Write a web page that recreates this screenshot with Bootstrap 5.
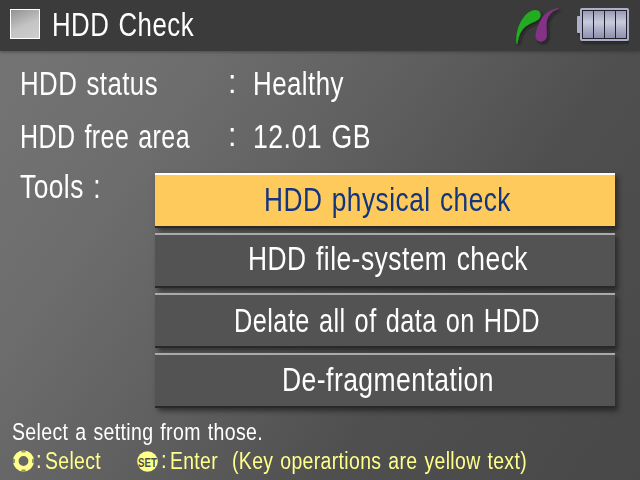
<!DOCTYPE html>
<html lang="en">
<head>
<meta charset="utf-8">
<meta name="viewport" content="width=device-width, initial-scale=1">
<title>HDD Check</title>
<link href="https://cdn.jsdelivr.net/npm/bootstrap@5.3.0/dist/css/bootstrap.min.css" rel="stylesheet">
<style>
  body { width: 640px; height: 480px; overflow: hidden; color: #fff;
    font-family: "Liberation Sans", Arial, sans-serif; font-size: 34px; line-height: 34px;
    background: linear-gradient(125deg, #757575 0%, #6d6d6d 25%, #5e5e5e 48%, #4f4f4f 68%, #484848 100%); }
  .topbar { height: 51px; background: #3b3b3b; box-shadow: 0 1px 3px rgba(40,40,40,.5); padding: 0 11px 0 10px; }
  .tile { width: 30px; height: 30px; border: 1px solid #fff; margin-top: -3px;
    background: linear-gradient(155deg, #929292, #c4c4c4 55%, #cecece); }
  .screen-title { margin: -3px 0 0 12px; font-size: 34px; line-height: 34px; font-weight: 400; }
  .fit { display: block; white-space: nowrap; flex: none; }
  .fit > span { display: inline-block; transform-origin: 0 50%; letter-spacing: .018em; word-spacing: .06em; }
  .panel { padding: 15px 25px 0 20px; height: 362px; }
  .info { height: 53px; }
  .label-col { width: 208px; }
  .colon-col { width: 25px; margin-top: -2px; }
  .tools-col { width: 135px; margin-top: -3px; }
  .tool-list { gap: 5px; width: 460px; margin-top: 1px; }
  .tool { height: 55px; border: 0; border-top: 2px solid #aaa; border-bottom: 2px solid #292929; border-radius: 0;
    background: #535353; color: #fff; padding: 7px 0 0 5px; font-size: 34px; line-height: 34px;
    box-shadow: 3px 3px 5px rgba(25,25,25,.65); }
  .tool.active { background: #ffca5c; border-top-color: #fff; color: #12357f; }
  .tool:nth-child(2) { padding-top: 6px; }
  .tool:nth-child(3) { padding-top: 8px; padding-left: 4px; }
  .hint { font-size: 24.5px; line-height: 26px; padding-left: 12px; margin-top: 6px; }
  .keys { font-size: 23.5px; line-height: 28px; color: #ffff8c; padding-left: 13px; margin-top: 2px; }
  .key-colon { margin: -1px 3px 0 1px; }
  .set-key { margin-left: 35px; }
  .key-note { margin-left: 14px; }
</style>
<script src="https://cdn.jsdelivr.net/npm/bootstrap@5.3.0/dist/js/bootstrap.bundle.min.js"></script>
</head>
<body>
<header class="topbar d-flex align-items-center">
  <div class="tile flex-shrink-0"></div>
  <h1 class="screen-title fit" data-w="142"><span>HDD Check</span></h1>
  <svg class="ms-auto" width="128" height="51" viewBox="501 0 128 51">
    <defs>
      <linearGradient id="cell" x1="0" y1="0" x2="0" y2="1">
        <stop offset="0" stop-color="#9698b4"/><stop offset=".42" stop-color="#c9cbdc"/>
        <stop offset=".6" stop-color="#b4b6cd"/><stop offset="1" stop-color="#8e90ad"/>
      </linearGradient>
      <filter id="soft" x="-20%" y="-20%" width="150%" height="150%">
        <feDropShadow dx="2" dy="2" stdDeviation="1.5" flood-color="#111" flood-opacity=".65"/>
      </filter>
    </defs>
    <g filter="url(#soft)">
      <path d="M516.300 43.500C515.500 31 519.500 21.500 526 14.500C530 10.500 535 9 538 10.500C541.500 12.500 541.500 17 538.500 19.500C534.500 22.500 528 23.500 523.500 28.500C519.500 33 518.500 38 517.500 43.500Z" fill="#20ac20"/>
      <path d="M558.500 8C550.500 9 544.500 13.500 541 19.500C538 25 535.500 31 535.500 36C535.800 43.500 546.200 43.500 546.800 36C547.200 30.500 545.500 25 547.300 19.500C549.300 14 553 10.500 558.500 9Z" fill="#843286"/>
      <path d="M582 8h45a2 2 0 0 1 2 2v29a2 2 0 0 1-2 2h-45a2 2 0 0 1-2-2v-6h-2a1 1 0 0 1-1-1V17a1 1 0 0 1 1-1h2v-6a2 2 0 0 1 2-2Z" fill="#aeb0c9"/>
    </g>
    <rect x="582.500" y="10.500" width="44" height="28" fill="url(#cell)" stroke="#20212a"/>
    <path d="M593.500 10v29M604.500 10v29M615.500 10v29" stroke="#20212a"/>
  </svg>
</header>

<main class="panel">
  <div class="info d-flex">
    <div class="label-col"><div class="fit" data-w="138"><span>HDD status</span></div></div>
    <div class="colon-col"><div class="fit" data-w="9"><span>:</span></div></div>
    <div class="fit" data-w="91"><span>Healthy</span></div>
  </div>
  <div class="info d-flex">
    <div class="label-col"><div class="fit" data-w="170"><span>HDD free area</span></div></div>
    <div class="colon-col"><div class="fit" data-w="9"><span>:</span></div></div>
    <div class="fit" data-w="118"><span>12.01 GB</span></div>
  </div>
  <div class="d-flex">
    <div class="tools-col"><div class="fit" data-w="81"><span>Tools :</span></div></div>
    <div class="tool-list d-flex flex-column">
      <button type="button" class="tool active d-flex justify-content-center"><span class="fit" data-w="247"><span>HDD physical check</span></span></button>
      <button type="button" class="tool d-flex justify-content-center"><span class="fit" data-w="280"><span>HDD file-system check</span></span></button>
      <button type="button" class="tool d-flex justify-content-center"><span class="fit" data-w="306"><span>Delate all of data on HDD</span></span></button>
      <button type="button" class="tool d-flex justify-content-center"><span class="fit" data-w="212"><span>De-fragmentation</span></span></button>
    </div>
  </div>
</main>

<footer>
  <div class="hint"><div class="fit" data-w="251"><span>Select a setting from those.</span></div></div>
  <div class="keys d-flex">
    <svg class="flex-shrink-0" width="22" height="28" viewBox="13 447 22 28">
      <circle cx="23.500" cy="461" r="7.700" fill="none" stroke="#ffff8c" stroke-width="5.600"/>
      <path d="M21.500 451.500h4M21.500 470.500h4M14 459v4M33 459v4" stroke="#96965c" stroke-width="2"/>
    </svg>
    <div class="fit key-colon" data-w="6"><span>:</span></div>
    <div class="fit" data-w="56"><span>Select</span></div>
    <svg class="flex-shrink-0 set-key" width="24" height="28" viewBox="136 447 24 28">
      <circle cx="147.500" cy="461.500" r="10.300" fill="#ffff8c"/>
      <text transform="translate(138 466.500) scale(.97 1.35)" font-size="10" font-weight="700" fill="#4f4f3f">SET</text>
    </svg>
    <div class="fit key-colon" data-w="6"><span>:</span></div>
    <div class="fit" data-w="48"><span>Enter</span></div>
    <div class="fit key-note" data-w="295"><span>(Key operartions are yellow text)</span></div>
  </div>
</footer>
<script>
  // Condense each label to its column width.
  document.querySelectorAll('.fit').forEach(function (box) {
    var text = box.firstElementChild, w = parseFloat(box.dataset.w);
    var natural = text.getBoundingClientRect().width;
    box.style.width = w + 'px';
    text.style.transform = 'scaleX(' + w / natural + ')';
  });
</script>
</body>
</html>
